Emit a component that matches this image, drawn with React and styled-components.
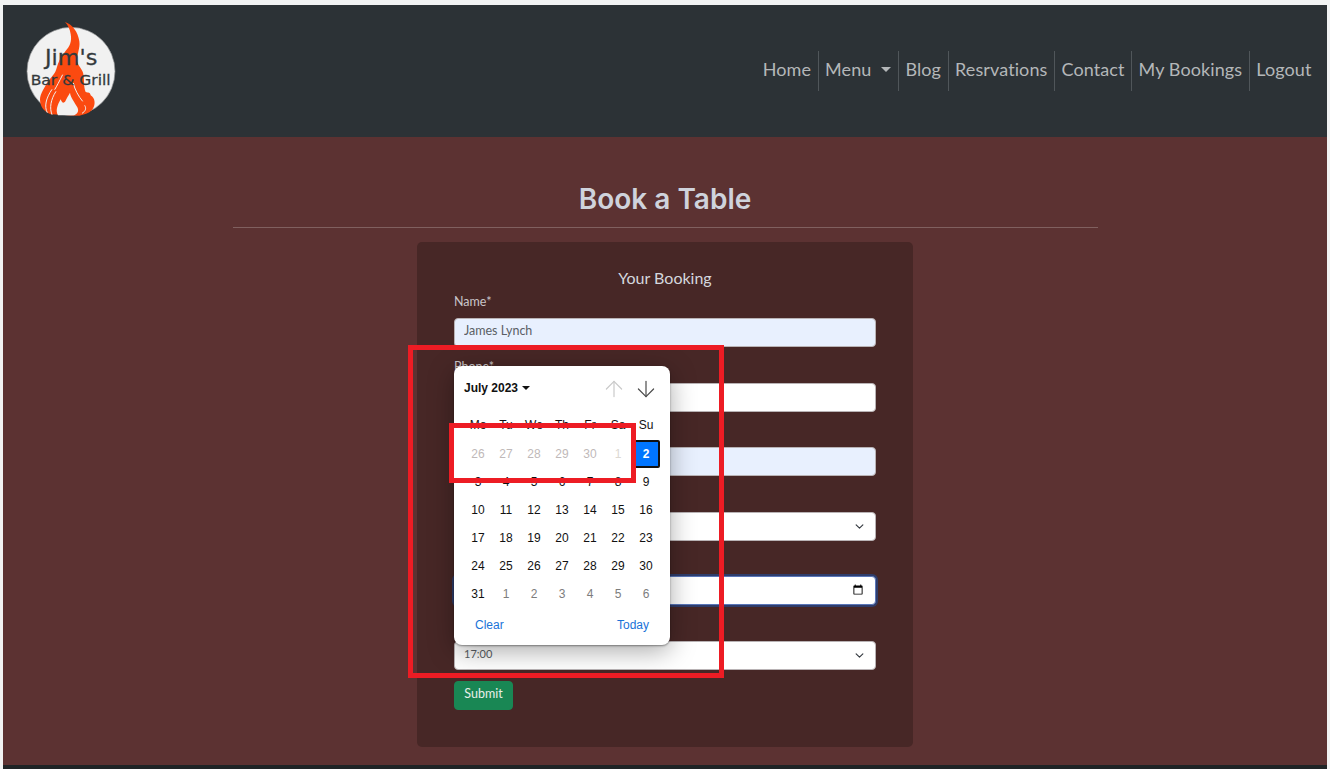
import React from "react";
import styled, { createGlobalStyle } from "styled-components";
import { ArrowUp, ArrowDown } from "lucide-react";

const GlobalStyle = createGlobalStyle`
  html, body {
    margin: 0;
    padding: 0;
    height: 769px;
    overflow: hidden;
    background: #f1f3f3;
  }
  * { box-sizing: border-box; }
`;

const NAV_LINKS = ["Home", "Menu", "Blog", "Resrvations", "Contact", "My Bookings", "Logout"];

const WEEK_DAYS = ["Mo", "Tu", "We", "Th", "Fr", "Sa", "Su"];

const DAYS = [
  [26, "past"], [27, "past"], [28, "past"], [29, "past"], [30, "past"], [1, "faint"], [2, "selected"],
  [3], [4], [5], [6], [7], [8], [9],
  [10], [11], [12], [13], [14], [15], [16],
  [17], [18], [19], [20], [21], [22], [23],
  [24], [25], [26], [27], [28], [29], [30],
  [31], [1, "next"], [2, "next"], [3, "next"], [4, "next"], [5, "next"], [6, "next"],
];

const dayColor = { past: "#bfb9b9", faint: "#dcd8d2", next: "#7d7d7d", selected: "#fff" };

const Logo = () => (
  <LogoSvg viewBox="0 0 315 306" aria-label="Jim's Bar and Grill">
    <circle cx="153" cy="160" r="132" fill="#f1f1f1" stroke="#8f9193" strokeWidth="2" />
    <path
      d="M135 12 C158 20 174 42 178 70 C181 92 170 108 172 130 C174 146 186 150 190 168 C194 190 190 205 197 222 C205 225 210 222 212 232 C226 240 228 262 216 276 C206 286 192 290 178 293 L92 289 C74 282 60 268 60 244 C60 228 74 206 88 186 C98 172 106 166 110 150 C114 134 122 118 136 100 C150 84 156 70 152 48 C150 34 144 22 135 12 Z"
      fill="#fb4a10"
    />
    <path
      d="M114 292 C106 278 112 262 122 244 C126 254 130 258 136 250 C140 240 146 232 150 224 C152 240 164 252 172 268 C178 280 172 288 162 292 Z"
      fill="#f1f1f1"
    />
    <LogoSlits d="M82 284 C72 266 78 240 96 214 M96 290 C88 270 92 245 108 220 M160 195 C164 215 176 235 188 250 M194 262 C200 272 196 280 186 286 M128 170 C118 190 110 205 104 215" />
    <LogoTitle x="75" y="140" textLength="157" lengthAdjust="spacingAndGlyphs">Jim's</LogoTitle>
    <LogoSub x="32" y="202" textLength="240" lengthAdjust="spacingAndGlyphs">Bar &amp; Grill</LogoSub>
  </LogoSvg>
);

// labels of the lower fields sit behind the open date popup, only the space is kept
const Field = ({ label, children }) => (
  <FieldWrap>
    <Label>{label}</Label>
    {children}
  </FieldWrap>
);

const DatePopup = () => (
  <Popup>
    <PopupHead>
      <MonthPick>
        July 2023 <Caret />
      </MonthPick>
      <Arrows>
        <ArrowUp size={26} strokeWidth={1.1} color="#c9c9c9" />
        <ArrowDown size={26} strokeWidth={1.1} color="#4a4a4a" />
      </Arrows>
    </PopupHead>
    <DayGrid>
      {WEEK_DAYS.map((d) => (
        <WeekCell key={d}>{d}</WeekCell>
      ))}
      {DAYS.map(([n, kind], i) => (
        <Cell key={i} $kind={kind}>
          {n}
        </Cell>
      ))}
    </DayGrid>
    <PopupFoot>
      <span>Clear</span>
      <span>Today</span>
    </PopupFoot>
  </Popup>
);

const App = () => {
  return (
    <React.Fragment>
      <GlobalStyle />
      <Page>
        <Nav>
          <Logo />
          <NavList>
            {NAV_LINKS.map((link) => (
              <NavItem key={link}>
                {link}
                {link === "Menu" && <NavCaret />}
              </NavItem>
            ))}
          </NavList>
        </Nav>
        <Main>
          <Title>Book a Table</Title>
          <Rule />
          <Card>
            <CardTitle>Your Booking</CardTitle>
            <Field label="Name*">
              <Input $filled readOnly value="James Lynch" />
            </Field>
            <Field label="Phone*">
              <Input readOnly value="" />
            </Field>
            <Field>
              <Input $filled readOnly value="" />
            </Field>
            <Field>
              <Select defaultValue="">
                <option value=""></option>
              </Select>
            </Field>
            <Field>
              <Input $focused type="date" defaultValue="2023-07-02" />
            </Field>
            <Field>
              <Select defaultValue="17:00">
                <option value="17:00">17:00</option>
              </Select>
            </Field>
            <Submit>Submit</Submit>
            <DatePopup />
          </Card>
        </Main>
        <Footer />
        <Annotation $left={408} $top={345} $width={316} $height={333} />
        <Annotation $left={449} $top={423} $width={187} $height={60} />
      </Page>
    </React.Fragment>
  );
};

const Page = styled.div`
  position: relative;
  height: 769px;
  padding: 5px 3px 0 3px;
  display: flex;
  flex-direction: column;
  overflow: hidden;
`;

const Nav = styled.nav`
  height: 132px;
  flex: none;
  background: #2c3236;
  display: flex;
  align-items: center;
  justify-content: space-between;
  padding: 0 9px 0 17px;
`;

const LogoSvg = styled.svg`
  width: 105px;
  height: 102px;
  align-self: flex-start;
  margin-top: 13px;
`;

const LogoSlits = styled.path`
  fill: none;
  stroke: #f1f1f1;
  stroke-width: 3;
`;

const LogoTitle = styled.text`
  font-family: "DejaVu Sans", sans-serif;
  font-size: 64px;
  fill: #33393c;
  stroke: #33393c;
  stroke-width: 0.8;
`;

const LogoSub = styled.text`
  font-family: "DejaVu Sans", sans-serif;
  font-size: 44px;
  fill: #33393c;
  stroke: #33393c;
  stroke-width: 0.8;
`;

const NavList = styled.ul`
  list-style: none;
  margin: 0;
  padding: 0;
  display: flex;
`;

const NavItem = styled.li`
  height: 40px;
  padding: 0 6.5px 4px;
  display: flex;
  align-items: center;
  font-family: "Lato", sans-serif;
  font-size: 18px;
  letter-spacing: 0.1px;
  color: #b4b7b9;
  border-right: 1px solid #50565a;
  &:last-child {
    border-right: none;
  }
`;

const NavCaret = styled.span`
  margin-left: 10px;
  border-top: 5px solid #b4b7b9;
  border-left: 5px solid transparent;
  border-right: 5px solid transparent;
`;

const Main = styled.main`
  flex: 1;
  background: #5c3232;
  display: flex;
  flex-direction: column;
  align-items: center;
  padding-top: 41px;
`;

const Title = styled.h1`
  margin: 0;
  font-family: "Inter", sans-serif;
  font-size: 28px;
  line-height: 42px;
  font-weight: 600;
  color: #cfd3dc;
`;

const Rule = styled.div`
  width: 865px;
  height: 1px;
  margin-top: 7px;
  background: #80605f;
`;

const Card = styled.section`
  position: relative;
  width: 496px;
  height: 505px;
  margin-top: 14px;
  padding: 24px 37px 0;
  background: #472726;
  border-radius: 5px;
`;

const CardTitle = styled.h2`
  margin: 0 0 5px;
  text-align: center;
  font-family: "Lato", sans-serif;
  font-size: 16px;
  line-height: 24px;
  font-weight: 400;
  color: #d5d7de;
`;

const FieldWrap = styled.div`
  height: 64.5px;
`;

const Label = styled.label`
  display: block;
  height: 23px;
  font-family: "Lato", sans-serif;
  font-size: 12.5px;
  line-height: 14px;
  color: #c9c5c8;
`;

const Input = styled.input`
  display: block;
  width: 100%;
  height: 29px;
  padding: ${(p) => (p.$focused ? "0 9px" : "0 9px 4px")};
  font-family: "Lato", sans-serif;
  font-size: 12.5px;
  color: #5a5f65;
  background: ${(p) => (p.$filled ? "#e8f0fe" : "#fff")};
  border: 1px solid ${(p) => (p.$focused ? "#5a76b8" : "#b9b3b5")};
  border-radius: 4px;
  outline: none;
  box-shadow: ${(p) => (p.$focused ? "0 0 0 2px #2f3d6b" : "none")};
`;

const Select = styled.select`
  display: block;
  width: 100%;
  height: 29px;
  padding: 0 9px 4px;
  font-family: "Lato", sans-serif;
  font-size: 11px;
  color: #5a5f65;
  border: 1px solid #b9b3b5;
  border-radius: 4px;
  appearance: none;
  background: #fff url("data:image/svg+xml,%3csvg xmlns='http://www.w3.org/2000/svg' viewBox='0 0 16 16'%3e%3cpath fill='none' stroke='%23343a40' stroke-linecap='round' stroke-linejoin='round' stroke-width='2' d='m2 5 6 6 6-6'/%3e%3c/svg%3e") no-repeat right 10px center / 11px 9px;
`;

const Submit = styled.button`
  display: block;
  width: 59px;
  height: 29px;
  margin-top: -1px;
  padding: 0 0 4px;
  font-family: "Lato", sans-serif;
  font-size: 12.5px;
  color: #e8efe9;
  background: #198754;
  border: 1px solid #198754;
  border-radius: 4px;
`;

const Popup = styled.div`
  position: absolute;
  left: 37px;
  top: 124px;
  width: 216px;
  height: 279px;
  padding: 0 10px;
  background: #fff;
  border-radius: 8px;
  box-shadow: 0 1px 2px rgba(0, 0, 0, 0.4), 0 6px 26px rgba(0, 0, 0, 0.34);
  font-family: "Liberation Sans", Arial, sans-serif;
  font-size: 12px;
  color: #111;
`;

const PopupHead = styled.div`
  height: 45px;
  padding-bottom: 2px;
  display: flex;
  align-items: center;
  justify-content: space-between;
`;

const MonthPick = styled.div`
  display: flex;
  align-items: center;
  gap: 4px;
  font-weight: 700;
`;

const Caret = styled.span`
  border-top: 4px solid #111;
  border-left: 4px solid transparent;
  border-right: 4px solid transparent;
`;

const Arrows = styled.div`
  display: flex;
  gap: 6px;
  margin-right: 1px;
  padding-top: 3px;
`;

const DayGrid = styled.div`
  display: grid;
  grid-template-columns: repeat(7, 28px);
  grid-template-rows: 29px;
  grid-auto-rows: 28px;
`;

const Cell = styled.div`
  display: flex;
  align-items: center;
  justify-content: center;
  color: ${(p) => dayColor[p.$kind] || "#111"};
  font-weight: ${(p) => (p.$kind === "selected" ? 700 : 400)};
  background: ${(p) => (p.$kind === "selected" ? "#0075ff" : "transparent")};
  border: ${(p) => (p.$kind === "selected" ? "2px solid #111" : "none")};
  border-radius: ${(p) => (p.$kind === "selected" ? "2px" : "0")};
`;

const WeekCell = styled(Cell)`
  padding-bottom: 2px;
`;

const PopupFoot = styled.div`
  display: flex;
  justify-content: space-between;
  padding: 10px 11px 0 11px;
  color: #1a73d8;
`;

const Footer = styled.footer`
  height: 4px;
  flex: none;
  background: #1f2426;
`;

const Annotation = styled.div`
  position: absolute;
  left: ${(p) => p.$left}px;
  top: ${(p) => p.$top}px;
  width: ${(p) => p.$width}px;
  height: ${(p) => p.$height}px;
  border: 5px solid #ed1c24;
  pointer-events: none;
`;

export default App;
